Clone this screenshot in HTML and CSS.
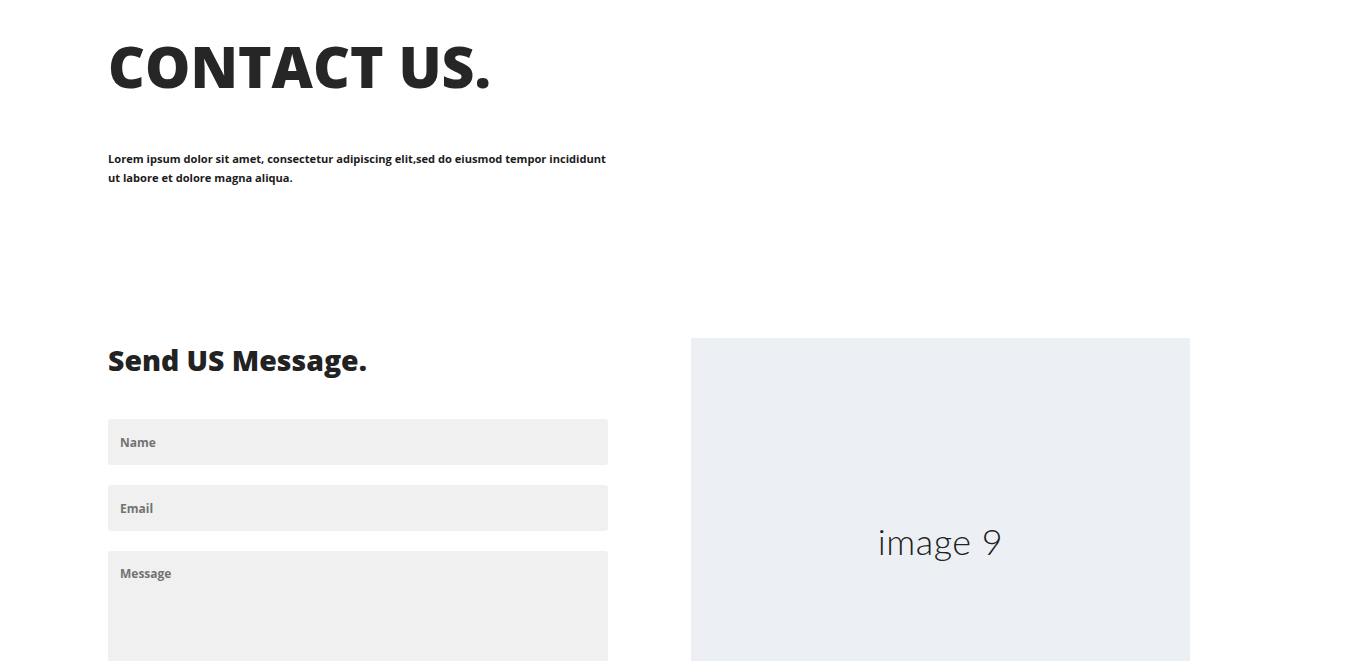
FILE: index.html
```html
<!DOCTYPE html>
<html lang="en">
<head>
<meta charset="utf-8">
<title>Contact Us</title>
<link rel="stylesheet" href="styles.css">
</head>
<body>
<main class="page">
  <header class="intro">
    <h1 class="title">CONTACT US.</h1>
    <p class="lead">Lorem ipsum dolor sit amet, consectetur adipiscing elit,sed do eiusmod tempor incididunt ut labore et dolore magna aliqua.</p>
  </header>
  <section class="contact">
    <form class="form">
      <h2 class="form-title">Send US Message.</h2>
      <input class="field" type="text" placeholder="Name">
      <input class="field" type="email" placeholder="Email">
      <textarea class="field area" placeholder="Message"></textarea>
    </form>
    <div class="image"><span class="image-label">image 9</span></div>
  </section>
</main>
</body>
</html>
```
FILE: styles.css
```css
* { box-sizing: border-box; }
html, body { margin: 0; padding: 0; background: #fff; }
body { font-family: "Open Sans", "Liberation Sans", sans-serif; color: #222; }
.page { padding: 0 0 0 108px; }
.intro { padding-top: 28px; }
.title {
  margin: 0;
  font-size: 57px;
  font-weight: 800;
  line-height: 76px;
  color: #262626;
}
.lead {
  margin: 45px 0 0;
  width: 500px;
  font-size: 11.1px;
  font-weight: 700;
  line-height: 19px;
  color: #1c1c1c;
}
.contact {
  display: grid;
  grid-template-columns: 500px 499px;
  column-gap: 83px;
  margin-top: 151px;
}
.form { display: flex; flex-direction: column; gap: 20px; padding-top: 4px; }
.form-title {
  margin: 0 0 21px;
  font-size: 28.4px;
  font-weight: 800;
  line-height: 36px;
  color: #222;
}
.field {
  display: block;
  width: 500px;
  height: 46px;
  border: none;
  border-radius: 3px;
  background: #f0f0f0;
  padding: 0 12px;
  font-family: inherit;
  font-size: 12px;
  font-weight: 700;
  color: #333;
  outline: none;
}
.field::placeholder { color: #737373; }
.area { height: 160px; padding-top: 14px; resize: none; }
.image {
  height: 406px;
  background: #ecf0f4;
  display: flex;
  align-items: center;
  justify-content: center;
}
.image-label {
  font-family: "Lato", "Noto Sans", sans-serif;
  font-weight: 300;
  font-size: 36px;
  letter-spacing: 0.5px;
  color: #222;
}
```
